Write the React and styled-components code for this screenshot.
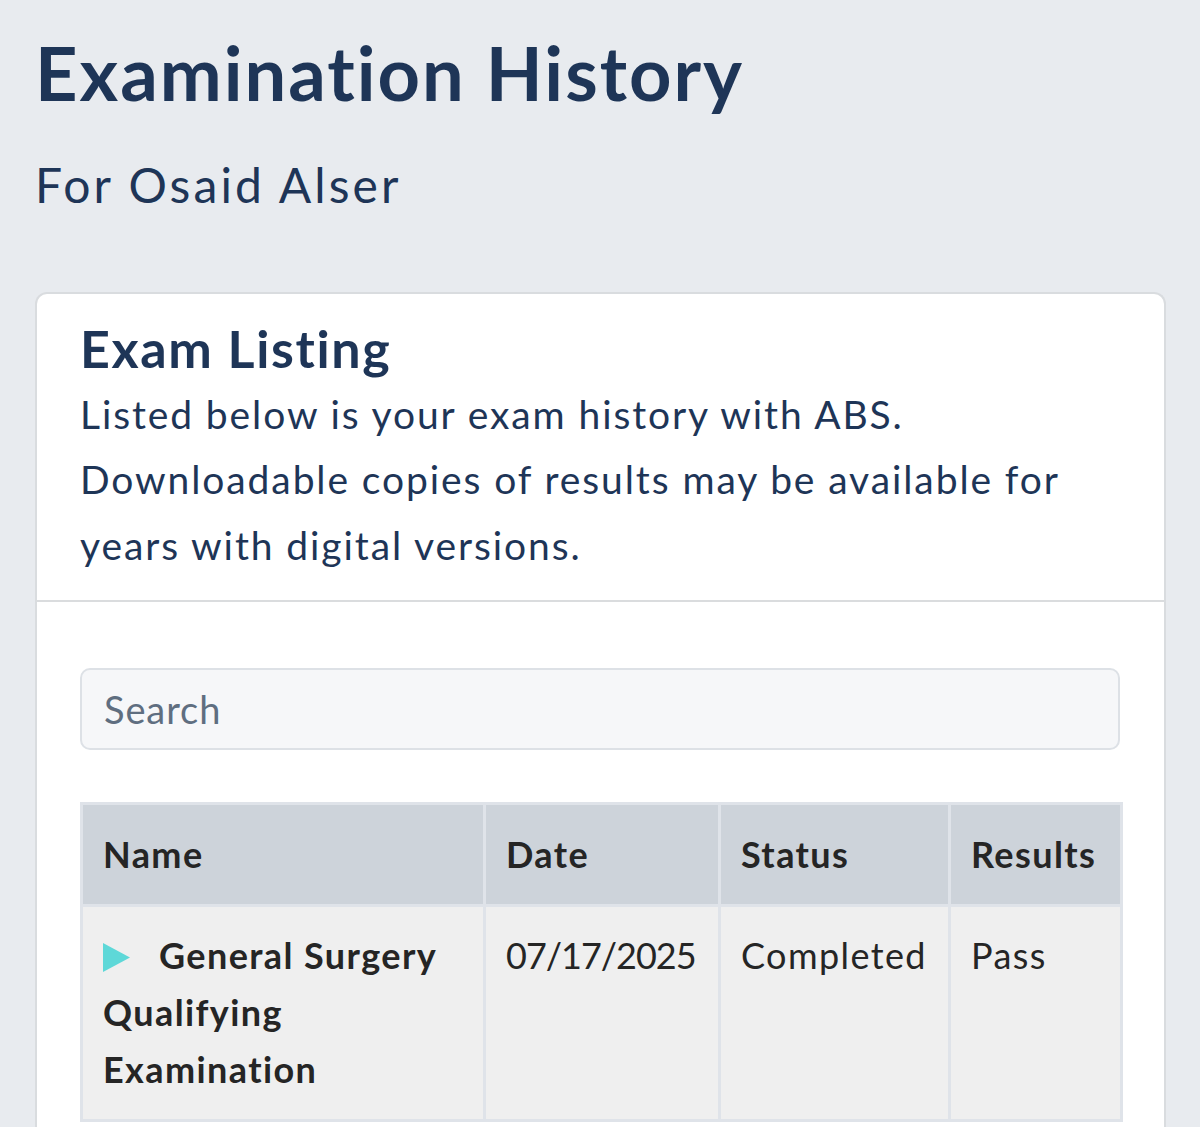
import React from "react";
import styled, { createGlobalStyle } from "styled-components";

const Global = createGlobalStyle`
  html, body { margin: 0; padding: 0; background: #e8ebef; }
  body {
    font-family: Lato, "Open Sans", sans-serif;
    font-variant-ligatures: none;
  }
  * { box-sizing: border-box; }
`;

const Page = styled.div`
  padding: 29px 34px 0 35px;
  min-height: 1127px;
  background: #e8ebef;
`;

const Title = styled.h1`
  margin: 0;
  font-size: 74px;
  line-height: 1.2;
  font-weight: 700;
  letter-spacing: 2px;
  color: #1e3557;
`;

const Subtitle = styled.p`
  margin: 38px 0 0;
  font-size: 48px;
  line-height: 1.2;
  font-weight: 400;
  letter-spacing: 3.1px;
  color: #1e3557;
`;

const Card = styled.section`
  margin-top: 79px;
  background: #fff;
  border: 2px solid #d9dcdf;
  border-bottom: none;
  border-radius: 12px 12px 0 0;
`;

const CardHeader = styled.header`
  padding: 23px 44px 22px 43px;
  border-bottom: 2px solid #dadcde;
`;

const CardTitle = styled.h2`
  margin: 0 0 2px;
  font-size: 52px;
  line-height: 1.2;
  font-weight: 700;
  letter-spacing: 1.6px;
  color: #1e3557;
`;

const Intro = styled.p`
  margin: 0;
  font-size: 39px;
  line-height: 65.5px;
  letter-spacing: 1.9px;
  color: #1e3557;
`;

const CardBody = styled.div`
  padding: 66px 44px 40px 43px;
`;

const Search = styled.input`
  display: block;
  width: 100%;
  height: 82px;
  padding: 0 22px;
  border: 2px solid #dde1e6;
  border-radius: 10px;
  background: #f6f7f9;
  font-family: inherit;
  font-size: 38px;
  letter-spacing: 0.9px;
  color: #2b2b2b;
  outline: none;
  &::placeholder { color: #5f6e80; }
`;

const Table = styled.table`
  margin-top: 52px;
  width: 100%;
  border-collapse: collapse;
  border: 3px solid #dfe3e9;
  table-layout: fixed;
`;

const Th = styled.th`
  width: ${(p) => p.$w}px;
  background: #cdd3da;
  border: 3px solid #dfe3e9;
  padding: 21px 20px;
  text-align: left;
  font-size: 36px;
  line-height: 57px;
  font-weight: 700;
  letter-spacing: 1.4px;
  color: #252525;
`;

const Td = styled.td`
  background: #efefef;
  border: 3px solid #dfe3e9;
  padding: 20px 20px 21px;
  vertical-align: top;
  font-size: 36px;
  line-height: 57px;
  font-weight: ${(p) => (p.$bold ? 700 : 400)};
  letter-spacing: ${(p) => (p.$digits ? "-1px" : "1.4px")};
  color: #252525;
`;

const Caret = styled.svg`
  display: inline-block;
  width: 27px;
  height: 29px;
  margin-right: 29px;
  vertical-align: -3px;
`;

export default function App() {
  return (
    <>
      <Global />
      <Page>
        <Title>Examination History</Title>
        <Subtitle>For Osaid Alser</Subtitle>
        <Card>
          <CardHeader>
            <CardTitle>Exam Listing</CardTitle>
            <Intro>
              Listed below is your exam history with ABS. Downloadable copies of
              results may be available for years with digital versions.
            </Intro>
          </CardHeader>
          <CardBody>
            <Search placeholder="Search" />
            <Table>
              <thead>
                <tr>
                  <Th $w={403}>Name</Th>
                  <Th $w={235}>Date</Th>
                  <Th $w={230}>Status</Th>
                  <Th $w={172}>Results</Th>
                </tr>
              </thead>
              <tbody>
                <tr>
                  <Td $bold>
                    <Caret viewBox="0 0 27 29">
                      <polygon points="0,0 27,14.5 0,29" fill="#5ed8d8" />
                    </Caret>
                    General Surgery Qualifying Examination
                  </Td>
                  <Td $digits>07/17/2025</Td>
                  <Td>Completed</Td>
                  <Td>Pass</Td>
                </tr>
              </tbody>
            </Table>
          </CardBody>
        </Card>
      </Page>
    </>
  );
}
